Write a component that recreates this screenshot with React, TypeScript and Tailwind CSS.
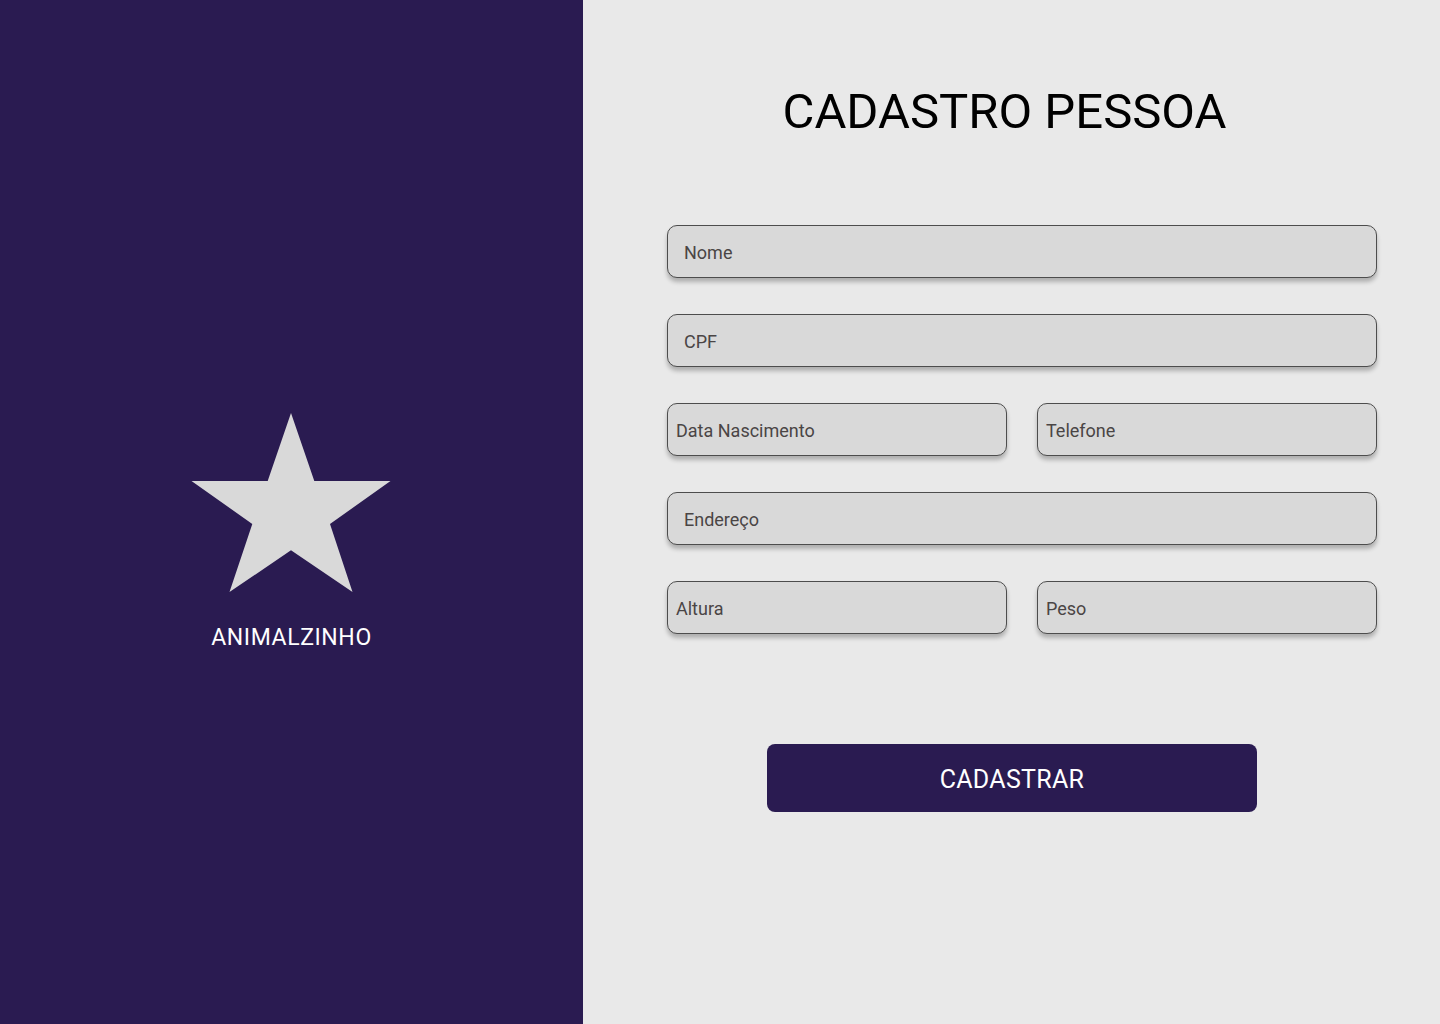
import React from "react";

const font = { fontFamily: '"Roboto", "Liberation Sans", sans-serif' };

function Field({ label, wide }: { label: string; wide?: boolean }) {
  return (
    <div
      className={`h-[53px] rounded-[10px] border border-[#4d4d4d] bg-[#d9d9d9] shadow-[0_4px_4px_rgba(0,0,0,0.25)] flex items-center pt-[2px] text-[18px] text-[#4a4545] ${
        wide ? "pl-[16px]" : "pl-[8px]"
      }`}
    >
      {label}
    </div>
  );
}

export default function App() {
  return (
    <div className="flex w-[1440px] h-[1024px]" style={font}>
      <div className="w-[583px] h-full bg-[#2a1b51] flex flex-col items-center pt-[413px]">
        <svg width="200" height="179" viewBox="0 0 200 179" className="-ml-[2px]">
          <polygon
            points="100,0 123.3,68 199.5,68 139,111 161.5,179 100,137.3 38.5,179 61.3,111 0.5,68 76.7,68"
            fill="#d9d9d9"
          />
        </svg>
        <div className="mt-[31px] text-white text-[23px] leading-[30px] tracking-[0.6px]">ANIMALZINHO</div>
      </div>
      <div className="flex-1 h-full bg-[#e9e9e9] flex flex-col">
        <h1 className="mt-[84px] text-center text-black text-[49px] leading-[56px] pr-[14px]">CADASTRO PESSOA</h1>
        <div className="mt-[85px] pl-[84px] pr-[63px] flex flex-col gap-[36px]">
          <Field label="Nome" wide />
          <Field label="CPF" wide />
          <div className="grid grid-cols-2 gap-[30px]">
            <Field label="Data Nascimento" />
            <Field label="Telefone" />
          </div>
          <Field label="Endereço" wide />
          <div className="grid grid-cols-2 gap-[30px]">
            <Field label="Altura" />
            <Field label="Peso" />
          </div>
        </div>
        <div className="mt-[110px] flex justify-center">
          <button className="w-[490px] h-[68px] rounded-[8px] bg-[#2a1b51] text-white text-[25px] pt-[4px] ml-[1px] tracking-[0.3px]">
            CADASTRAR
          </button>
        </div>
      </div>
    </div>
  );
}
